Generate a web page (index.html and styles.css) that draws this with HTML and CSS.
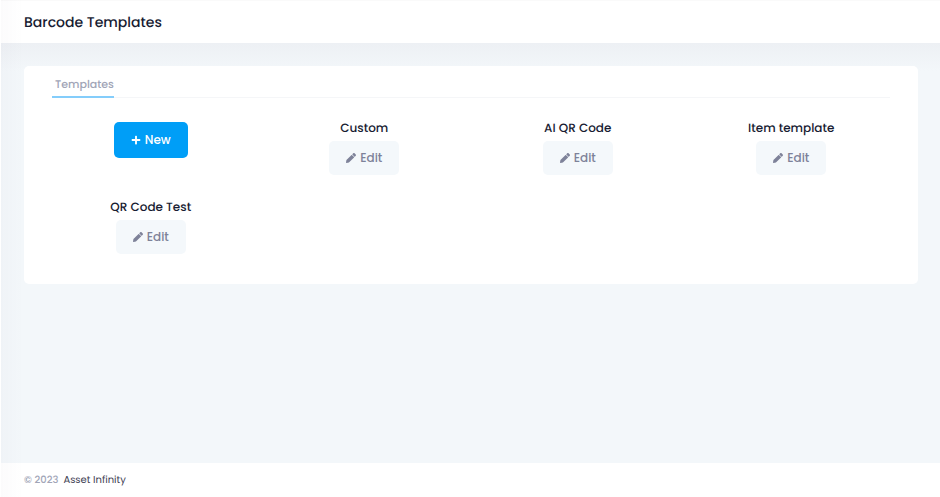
FILE: index.html
```html
<!DOCTYPE html>
<html lang="en">
<head>
<meta charset="utf-8">
<meta name="viewport" content="width=device-width, initial-scale=1">
<title>Barcode Templates</title>
<link rel="stylesheet" href="styles.css">
</head>
<body>
<svg class="sprite" aria-hidden="true">
  <symbol id="pencil" viewBox="0 0 512 512"><path d="M498 142l-46 46c-5 5-13 5-17 0L324 77c-5-5-5-12 0-17l46-46c19-19 49-19 68 0l60 60c19 19 19 49 0 68zM284 100L22 362 0 484c-3 16 12 30 28 28l122-22 262-262c5-5 5-13 0-17L301 100c-4-5-12-5-17 0z"/></symbol>
  <symbol id="plus" viewBox="0 0 448 512"><path d="M416 208H272V64c0-18-14-32-32-32h-32c-18 0-32 14-32 32v144H32c-18 0-32 14-32 32v32c0 18 14 32 32 32h144v144c0 18 14 32 32 32h32c18 0 32-14 32-32V304h144c18 0 32-14 32-32v-32c0-18-14-32-32-32z"/></symbol>
</svg>
<header class="page-header"><h1>Barcode Templates</h1></header>
<main class="content">
  <section class="card">
    <nav class="tabs"><a class="tab" href="#templates">Templates</a></nav>
    <div class="templates" id="templates">
      <div class="template">
        <button class="btn btn-primary" type="button"><svg class="icon"><use href="#plus"/></svg>New</button>
      </div>
      <div class="template">
        <h2>Custom</h2>
        <button class="btn" type="button"><svg class="icon"><use href="#pencil"/></svg>Edit</button>
      </div>
      <div class="template">
        <h2>AI QR Code</h2>
        <button class="btn" type="button"><svg class="icon"><use href="#pencil"/></svg>Edit</button>
      </div>
      <div class="template">
        <h2>Item template</h2>
        <button class="btn" type="button"><svg class="icon"><use href="#pencil"/></svg>Edit</button>
      </div>
      <div class="template">
        <h2>QR Code Test</h2>
        <button class="btn" type="button"><svg class="icon"><use href="#pencil"/></svg>Edit</button>
      </div>
    </div>
  </section>
</main>
<footer class="page-footer"><span>© 2023</span><a href="#">Asset Infinity</a></footer>
</body>
</html>
```
FILE: styles.css
```css
* { box-sizing: border-box; }

body {
  margin: 0;
  min-height: 100vh;
  display: flex;
  flex-direction: column;
  background: #f3f7fa;
  color: #181c32;
  font-family: Poppins, Inter, sans-serif;
  font-size: 12px;
  line-height: 18px;
  text-rendering: geometricPrecision;
}

h1, h2 { margin: 0; font-weight: 500; }

.sprite { display: none; }

/* soft shade along the left edge of the window */
body::before {
  content: "";
  position: fixed;
  inset: 0 auto 0 0;
  width: 22px;
  border-left: 1px solid #fff;
  background: linear-gradient(to right, rgba(82, 63, 105, 0.02), rgba(82, 63, 105, 0));
  pointer-events: none;
}

.page-header {
  padding: 12px 24px;
  background: #fff;
  border-top: 1px solid #fafafa;
}

.page-header h1 { font-size: 14px; }

.content {
  flex: 1;
  padding: 23px 22px 24px 24px;
  background: linear-gradient(#edf0f4, #f3f7fa 28px);
}

.card {
  padding: 6px 20px 12px;
  background: #fff;
  border-radius: 5px;
}

.tabs {
  display: flex;
  margin: 0 8px;
  border-bottom: 1px solid #f5f6f8;
}

.tab {
  margin-bottom: -1px;
  padding: 3px 0 3px 3px;
  border-bottom: 2px solid #84cdfb;
  color: #a1a5b7;
  font-size: 11px;
  font-weight: 500;
  text-decoration: none;
}

.templates {
  display: grid;
  grid-template-columns: repeat(4, 1fr);
  row-gap: 24px;
  padding: 22px 0 18px;
}

.template {
  display: flex;
  flex-direction: column;
  align-items: center;
  gap: 3px;
}

.template h2 { font-size: 12px; }

.btn {
  display: flex;
  align-items: center;
  justify-content: center;
  gap: 4px;
  min-width: 70px;
  min-height: 34px;
  padding: 8px 16px;
  border: 0;
  border-radius: 5px;
  background: #f4f8fb;
  color: #7e8299;
  font: inherit;
  font-weight: 500;
}

.btn-primary {
  min-width: 74px;
  min-height: 36px;
  margin-top: 2px;
  background: #009ef7;
  color: #fff;
}

.icon { width: 10px; height: 10px; fill: currentColor; }

.page-footer {
  display: flex;
  gap: 5px;
  padding: 8px 24px;
  background: #fff;
  color: #a1a5b7;
  font-size: 10px;
}

.page-footer span { font-weight: 500; }

.page-footer a { color: #3f4254; text-decoration: none; }
```
